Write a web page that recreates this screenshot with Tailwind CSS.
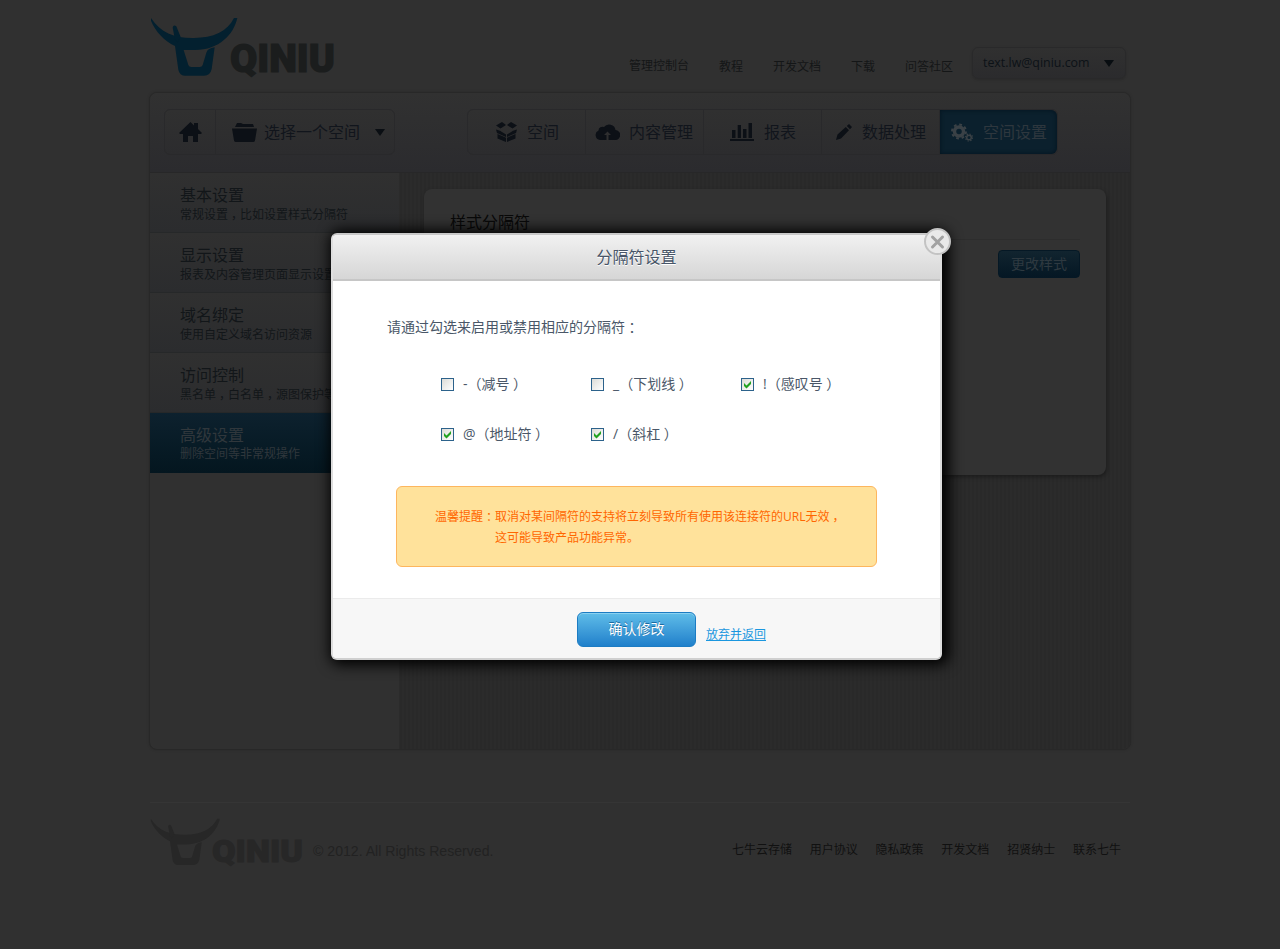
<!DOCTYPE html>
<html lang="zh-CN">
<head>
<meta charset="utf-8">
<title>QINIU</title>
<script src="https://cdn.jsdelivr.net/npm/@tailwindcss/browser@4"></script>
</head>
<body class="relative h-[949px] w-[1280px] overflow-hidden bg-[#303030] font-['Open_Sans','Noto_Sans_CJK_SC',sans-serif] text-[12px] leading-none text-[#14181d]">
<svg class="hidden">
  <symbol id="bull" viewBox="30 36 270 180">
    <path d="M33 39C62 84 105 100 162 99C220 98 262 80 282 39H292C281 88 238 135 165 135H131L145 180Q147 186 154 186H179Q186 186 188 180L199 143Q203 130 224 127L215 192Q211 212 192 212H137Q118 212 115 194L105 123C73 108 46 79 33 47Z"/>
    <path d="M98 68Q100 58 109 64L122 96L112 112L105 104Z"/>
  </symbol>
</svg>
<div class="mx-auto flex w-[980px] flex-col">
  <header class="flex h-[92px] justify-between">
    <div class="flex pt-[17px]">
      <svg class="h-[60px] w-[90px] fill-[#03202f]"><use href="#bull"/></svg>
      <svg class="h-[64px] w-[100px] overflow-visible" viewBox="0 0 100 64"><text x="-10" y="55" textLength="105" lengthAdjust="spacingAndGlyphs" font-family="Roboto" font-weight="900" font-size="38.500" fill="#1b1d1d" stroke="#1b1d1d" stroke-width="1.200">QINIU</text></svg>
    </div>
    <div class="flex pr-1">
      <nav class="flex gap-[30px] pt-[61px] text-[#141617]">
        <a class="-mt-px">管理控制台</a><a>教程</a><a>开发文档</a><a>下载</a><a>问答社区</a>
      </nav>
      <div class="mt-[47px] ml-[19px] flex h-[32px] w-[154px] items-center justify-between rounded-md border border-[#29292a] bg-linear-to-b from-[#303030] to-[#2b2b2d] pr-[11px] pl-[10px] text-[12.400px] text-[#0c1217] shadow-sm">
        <span>text.lw@qiniu.com</span>
        <svg class="h-[7px] w-[10px] fill-[#080d11]"><path d="M0 0H10L5 7Z"/></svg>
      </div>
    </div>
  </header>

  <main class="-mx-px flex h-[658px] flex-col overflow-hidden rounded-lg border border-[#282828] bg-[#303030] shadow-[0_0_3px_rgba(0,0,0,.15)]">
    <div class="flex h-[80px] shrink-0 border-b border-[#272728] bg-linear-to-b from-[#313131] to-[#2b2b2e] pt-4 pl-[14px] text-[16px] text-[#11151c]">
      <div class="flex h-[46px] w-[231px] rounded-md border border-[#29292b] bg-linear-to-b from-[#303030] to-[#2c2c2e]">
        <div class="flex w-[51px] items-center justify-center border-r border-[#29292b]">
          <svg class="h-5 w-[23px] fill-[#0c1016]" viewBox="0 0 23 20"><path d="M11.500 0L15 3.500V1H19V7L23 11L22 12H19V20H14V14H9V20H4V12H1L0 11Z"/></svg>
        </div>
        <div class="flex flex-1 items-center pl-4">
          <svg class="h-5 w-[25px] fill-[#0c1016]" viewBox="0 0 25 20"><path d="M3 5L5 1H9L11 2H21L22 5ZM0 6.500H25L23 18.500Q22.700 20 21 20H4Q2.300 20 2 18.500Z"/></svg>
          <span class="ml-[7px]">选择一个空间</span>
          <svg class="ml-[15px] h-[7px] w-[10px] fill-[#0a0e13]"><path d="M0 0H10L5 7Z"/></svg>
        </div>
      </div>
      <nav class="ml-[72px] flex h-[46px] w-[591px] rounded-md border border-[#29292b] bg-linear-to-b from-[#303030] to-[#2c2c2e]">
        <a class="flex w-[118px] items-center border-r border-[#29292b] pl-7">
          <svg class="mr-2.5 h-[20px] w-[21px] fill-[#0c1016]" viewBox="0 0 21 20"><path d="M6 0L10 3L4.500 6.500L0 3.500ZM15 0L11 3L16.500 6.500L21 3.500ZM0 7.500L4 8.800L10 12.500V15L1 11ZM21 7.500L17 8.800L11 12.500V15L20 11ZM1.500 12L10 15.800V20L1.500 16.500ZM19.500 12L11 15.800V20L19.500 16.500Z"/></svg>空间</a>
        <a class="flex w-[118px] items-center border-r border-[#29292b] pl-[9px]">
          <svg class="mr-[9px] h-4 w-[25px]" viewBox="0 0 25 16"><path fill="#0c1016" d="M5 16A5 5 0 0 1 3.500 6.500A4 4 0 0 1 9 3A6.500 6.500 0 0 1 20.500 6A5 5 0 0 1 20 16Z"/><path fill="#2e2e2f" d="M12.500 7.500L16 11H13.500V16H11.500V11H9Z"/></svg>内容管理</a>
        <a class="flex w-[118px] items-center border-r border-[#29292b] pl-[26px]">
          <svg class="mr-2.5 h-[18px] w-6 fill-[#0c1016]"><path d="M0 16H24V18H0ZM2 7H5.500V15H2ZM7.700 2H11V15H7.700ZM13 6H16.500V15H13ZM18.500 0H22V15H18.500Z"/></svg>报表</a>
        <a class="flex w-[118px] items-center border-r border-[#29292b] pl-3.5">
          <svg class="mr-2.5 h-4 w-4 fill-[#0c1016]"><path d="M0 16L1.500 10.500L9.800 3L13 6.200L5 14.500ZM10.800 2L13 0L16 3L14 5.200Z"/></svg>数据处理</a>
        <a class="flex flex-1 items-center rounded-r-md bg-[#0b202d] pl-[11px] text-[#2e373e] shadow-[inset_0_0_4px_#03131e]">
          <svg class="mr-2.5 h-[19px] w-[22px] fill-none stroke-[#3a4146]" viewBox="0 0 22 19"><circle cx="8" cy="8.500" r="4.500" stroke-width="3.500"/><circle cx="8" cy="8.500" r="7" stroke-width="2" stroke-dasharray="2.750"/><circle cx="18" cy="14.500" r="2.300" stroke-width="1.500"/><circle cx="18" cy="14.500" r="3.500" stroke-width="1.200" stroke-dasharray="1.375"/></svg>空间设置</a>
      </nav>
    </div>

    <div class="flex flex-1">
      <aside class="w-[249px] shrink-0 text-[#121619]">
        <div class="flex h-[60px] flex-col gap-[6px] border-b border-[#262829] bg-linear-to-b from-[#303030] to-[#2b2c2e] pt-[14px] pl-[30px]"><b class="text-[16px] font-normal">基本设置</b><span>常规设置<i class="inline-block w-[1em] text-center not-italic [font-feature-settings:'halt']">，</i>比如设置样式分隔符</span></div>
        <div class="flex h-[60px] flex-col gap-[6px] border-b border-[#262829] bg-linear-to-b from-[#303030] to-[#2b2c2e] pt-[14px] pl-[30px]"><b class="text-[16px] font-normal">显示设置</b><span>报表及内容管理页面显示设置</span></div>
        <div class="flex h-[60px] flex-col gap-[6px] border-b border-[#262829] bg-linear-to-b from-[#303030] to-[#2b2c2e] pt-[14px] pl-[30px]"><b class="text-[16px] font-normal">域名绑定</b><span>使用自定义域名访问资源</span></div>
        <div class="flex h-[60px] flex-col gap-[6px] border-b border-[#262829] bg-linear-to-b from-[#303030] to-[#2b2c2e] pt-[14px] pl-[30px]"><b class="text-[16px] font-normal">访问控制</b><span>黑名单<i class="inline-block w-[1em] text-center not-italic [font-feature-settings:'halt']">，</i>白名单<i class="inline-block w-[1em] text-center not-italic [font-feature-settings:'halt']">，</i>源图保护等</span></div>
        <div class="flex h-[60px] flex-col gap-[5px] bg-linear-to-b from-[#0d212e] to-[#04161f] pt-[14px] pl-[30px] text-[#30373c]"><b class="text-[16px] font-normal">高级设置</b><span>删除空间等非常规操作</span></div>
      </aside>
      <section class="flex-1 border-l border-[#2b2b2b] bg-[repeating-linear-gradient(90deg,#292929_0_2px,#2b2b2b_2px_4px)] pt-4 pl-6">
        <div class="h-[286px] w-[682px] rounded-lg bg-[#323232] pr-[26px] pl-[26px] pt-[25px] shadow-[1px_2px_4px_rgba(0,0,0,.35)]">
          <h2 class="h-[26px] border-b border-[#2d2d2d] text-[16px] text-[#090909]">样式分隔符</h2>
          <div class="mt-2.5 ml-auto flex h-[28px] w-[82px] items-center justify-center rounded border border-[#051825] bg-linear-to-b from-[#11242f] to-[#051724] text-[14px] text-[#2e3940]">更改样式</div>
        </div>
      </section>
    </div>
  </main>

  <footer class="mt-[52px] flex justify-between border-t border-[#353535] pt-[15px]">
    <div class="flex">
      <svg class="h-[48px] w-[72px] fill-[#272727]"><use href="#bull"/></svg>
      <svg class="h-[50px] w-[91px] overflow-visible" viewBox="0 0 91 50"><text x="-10" y="44" textLength="91" lengthAdjust="spacingAndGlyphs" font-family="Roboto" font-weight="900" font-size="31.500" fill="#272727" stroke="#272727">QINIU</text></svg>
      <span class="pt-[26px] font-['Liberation_Sans'] text-[14.100px] text-[#222]">© 2012. All Rights Reserved.</span>
    </div>
    <nav class="flex gap-[17.800px] pt-[26px] pr-[9px] text-[#111]">
      <a>七牛云存储</a><a>用户协议</a><a>隐私政策</a><a>开发文档</a><a>招贤纳士</a><a>联系七牛</a>
    </nav>
  </footer>
</div>

<!-- Dialog -->
<div class="absolute top-[233px] left-[331px] flex h-[427px] w-[611px] flex-col rounded-md border-2 border-t-[#c8c8c8] border-r-[#dedede] border-b-[#d0d0d0] border-l-[#dedede] bg-white text-[14px] text-[#4a5768] shadow-[3px_1px_14px_4px_#000]">
  <div class="flex h-[46px] shrink-0 items-center justify-center rounded-t border-b-2 border-[#c6c6c6] bg-linear-to-b from-[#f1f1f1] to-[#d6d6d6] text-[16px] text-[#485568] text-shadow-[0_1px_0_#fff]"><span>分隔符设置</span></div>
  <svg class="absolute -top-[7px] left-[591px] h-[28px] w-[28px]" viewBox="0 0 28 28"><circle cx="13.500" cy="13.500" r="12.500" fill="#e9e9e9" stroke="#c3c3c3" stroke-width="2"/><path d="M8.500 9L18.500 19M18.500 9L8.500 19" stroke="#a2a2a2" stroke-width="3" stroke-linecap="round"/></svg>
  <div class="flex flex-1 flex-col px-[54px] pt-[39px]">
    <p class="h-[14px]">请通过勾选来启用或禁用相应的分隔符<i class="inline-block w-[1em] text-center not-italic [font-feature-settings:'halt']">：</i></p>
    <div class="mt-[43px] ml-[54px] grid grid-cols-[150px_150px_150px] gap-y-[36px]">
      <label class="flex h-[14px] items-center gap-[9px]"><i class="size-[13px] border border-[#2c628b] bg-linear-to-br from-[#dcdcd7] to-white"></i><span>-（减号<i class="inline-block w-[1em] text-center not-italic [font-feature-settings:'halt']">）</i></span></label>
      <label class="flex h-[14px] items-center gap-[9px]"><i class="size-[13px] border border-[#2c628b] bg-linear-to-br from-[#dcdcd7] to-white"></i><span>_（下划线<i class="inline-block w-[1em] text-center not-italic [font-feature-settings:'halt']">）</i></span></label>
      <label class="flex h-[14px] items-center gap-[9px]"><i class="size-[13px] border border-[#2c628b] bg-linear-to-br from-[#dcdcd7] to-white"><svg class="size-[11px] fill-[#21a121]"><path d="M2 4L4.500 6.500L9 2V5L4.500 9.500L2 7Z"/></svg></i><span>!（感叹号<i class="inline-block w-[1em] text-center not-italic [font-feature-settings:'halt']">）</i></span></label>
      <label class="flex h-[14px] items-center gap-[9px]"><i class="size-[13px] border border-[#2c628b] bg-linear-to-br from-[#dcdcd7] to-white"><svg class="size-[11px] fill-[#21a121]"><path d="M2 4L4.500 6.500L9 2V5L4.500 9.500L2 7Z"/></svg></i><span>@（地址符<i class="inline-block w-[1em] text-center not-italic [font-feature-settings:'halt']">）</i></span></label>
      <label class="flex h-[14px] items-center gap-[9px]"><i class="size-[13px] border border-[#2c628b] bg-linear-to-br from-[#dcdcd7] to-white"><svg class="size-[11px] fill-[#21a121]"><path d="M2 4L4.500 6.500L9 2V5L4.500 9.500L2 7Z"/></svg></i><span>/（斜杠<i class="inline-block w-[1em] text-center not-italic [font-feature-settings:'halt']">）</i></span></label>
    </div>
    <div class="mt-[45px] ml-[9px] h-[81px] w-[481px] rounded-md border border-[#fdb65e] bg-[#ffe29b] pt-[19px] pl-[38px] text-[12px] leading-[21px] text-[#ff6600]">
      <p class="h-[21px]">温馨提醒<i class="inline-block w-[1em] text-center not-italic [font-feature-settings:'halt']">：</i>取消对某间隔符的支持将立刻导致所有使用该连接符的URL无效<i class="inline-block w-[1em] text-center not-italic [font-feature-settings:'halt']">，</i></p>
      <p class="pl-[60px]">这可能导致产品功能异常。</p>
    </div>
  </div>
  <div class="flex h-[60px] shrink-0 rounded-b border-t border-[#ebebeb] bg-[#f7f7f7] pt-[13px] pl-[244px]">
    <button class="h-[35px] w-[119px] rounded-md border border-[#1c7cc3] bg-linear-to-b from-[#5fbde8] to-[#1f80cb] pb-0.5 text-[14px] text-white shadow-[inset_0_1px_0_#8ad1f0] text-shadow-[0_-1px_0_#1c6ba0]">确认修改</button>
    <a class="ml-2.5 pt-[17px] text-[12px] text-[#1b97df] underline">放弃并返回</a>
  </div>
</div>
</body>
</html>
